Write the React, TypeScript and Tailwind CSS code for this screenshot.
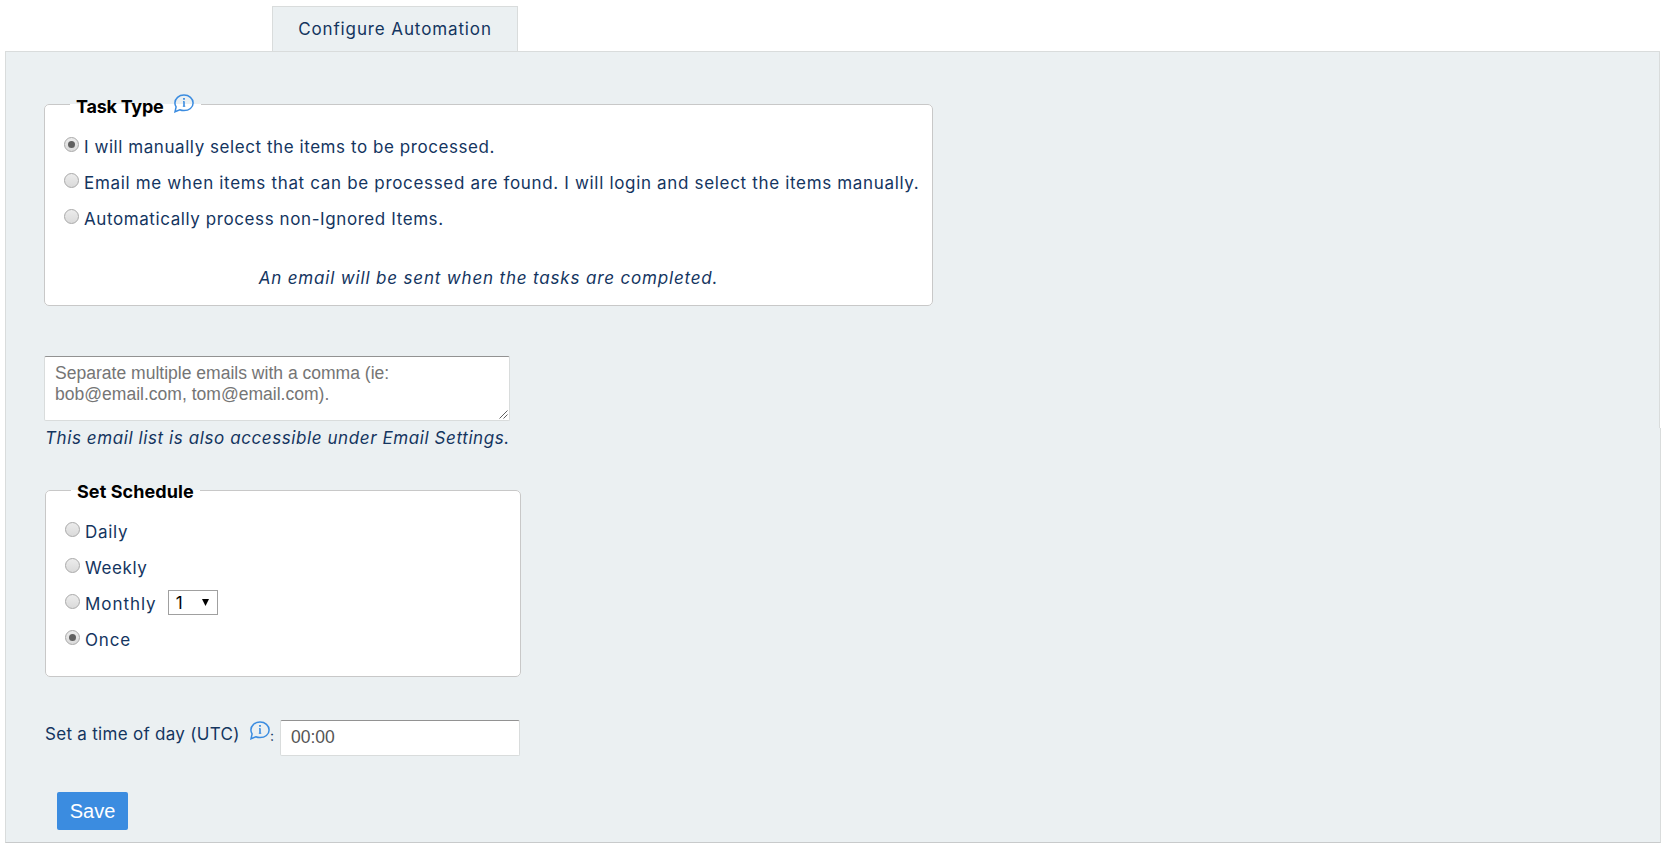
import { useState } from "react";

const taskTypes = [
  { label: "I will manually select the items to be processed.", tracking: "tracking-[0.56px]" },
  {
    label: "Email me when items that can be processed are found. I will login and select the items manually.",
    tracking: "tracking-[0.67px]",
  },
  { label: "Automatically process non-Ignored Items.", tracking: "tracking-[0.59px]" },
];

const schedules = [
  { label: "Daily", tracking: "tracking-[0.7px]" },
  { label: "Weekly", tracking: "tracking-[0.6px]" },
  { label: "Monthly", tracking: "tracking-[0.95px]" },
  { label: "Once", tracking: "tracking-[0.8px]" },
];

function InfoIcon() {
  return (
    <svg width="20" height="19" viewBox="0 0 20 19" fill="none" stroke="#3b8ce0" strokeWidth="1.5">
      <path d="M1 17.8 L2.1 12.8 C1.3 11.6 0.9 10.4 0.9 9 C0.9 4.5 4.9 1 10 1 C15.1 1 19.1 4.5 19.1 9 C19.1 13.5 15.1 16.6 10 16.6 C8.4 16.6 7 16.3 5.8 15.8 Z" />
      <path d="M10 7.2 V12.6" strokeWidth="1.6" />
      <path d="M9 7.6 H10 M8.8 12.3 H11.3" strokeWidth="0.9" />
      <path d="M9.1 4.8 H10.9" strokeWidth="1.7" />
    </svg>
  );
}

function Radio({ name, checked, onChange }: { name: string; checked: boolean; onChange: () => void }) {
  return (
    <span className="mb-[5px] flex size-[15px] shrink-0 items-center justify-center rounded-full border border-[#a9a9a9] bg-linear-to-b from-[#ececec] to-[#dadada]">
      <input type="radio" name={name} checked={checked} onChange={onChange} className="sr-only" />
      {checked && <span className="size-[7px] rounded-full bg-[#606060]" />}
    </span>
  );
}

export default function App() {
  const [taskType, setTaskType] = useState(0);
  const [schedule, setSchedule] = useState("Once");

  return (
    <div className="h-[843px] overflow-hidden bg-white pt-1.5 pl-[5px] font-['Inter',sans-serif] text-[17px] text-[#14355f]">
      {/* Tab */}
      <div className="ml-[267px] flex h-[45px] w-[246px] justify-center border border-b-0 border-[#d9dcdc] bg-[#ebf0f2] pt-[10px] leading-6">
        <span className="tracking-[0.88px]">Configure Automation</span>
      </div>

      {/* Task type and emails */}
      <div className="h-[377px] w-[1655px] border-x border-t border-[#d9dcdc] bg-[#ebf0f2] pt-[38px] pl-[38px]">
        <fieldset className="h-[216px] w-[889px] rounded-[5px] border border-[#c8c8c8] bg-white pl-[19px]">
          <legend className="ml-1.5 flex h-7 w-[131px] pl-1.5 leading-7">
            <span className="pt-[3px] text-lg leading-7 font-bold tracking-[-0.25px] whitespace-nowrap text-black">
              Task Type
            </span>
            <span className="ml-auto pt-1 pr-[7px]">
              <InfoIcon />
            </span>
          </legend>
          <div className="pt-[11px]">
            {taskTypes.map((t, i) => (
              <label key={t.label} className="flex h-9 items-center gap-[5px] whitespace-nowrap">
                <Radio name="task" checked={taskType === i} onChange={() => setTaskType(i)} />
                <span className={t.tracking + " pt-0.5"}>{t.label}</span>
              </label>
            ))}
          </div>
          <p className="mt-[29px] pr-[19px] text-center leading-6 tracking-[0.83px] italic">
            An email will be sent when the tasks are completed.
          </p>
        </fieldset>

        <div className="relative mt-[50px] w-[466px]">
          <textarea
            className="block h-[65px] w-full resize-none rounded-[2px] border border-[#d9dcdc] border-t-[#929292] bg-white px-2.5 pt-1.5 font-['Liberation_Sans',Arial,sans-serif] text-[17.55px] leading-[21px] placeholder:text-[#757575]"
            placeholder={"Separate multiple emails with a comma (ie:\nbob@email.com, tom@email.com)."}
          />
          <svg className="absolute right-[2px] bottom-[2px]" width="9" height="9" viewBox="0 0 9 9" stroke="#606060">
            <path d="M0.5 8.5 L8.5 0.5 M4.5 8.5 L8.5 4.5" />
          </svg>
        </div>
      </div>

      {/* Schedule */}
      <div className="h-[415px] w-[1656px] border-x border-b border-[#d9dcdc] border-b-[#c8cacb] bg-[#ebf0f2] pl-[39px]">
        <p className="leading-5 tracking-[0.59px] italic">This email list is also accessible under Email Settings.</p>

        <fieldset className="mt-7 h-[201px] w-[476px] rounded-[5px] border border-[#c8c8c8] bg-white pl-[19px]">
          <legend className="ml-1.5 h-7 w-[129px] pt-0.5 pl-1.5 text-lg leading-7 font-bold tracking-[0.08px] whitespace-nowrap text-black">
            Set Schedule
          </legend>
          <div className="pt-2.5">
            {schedules.map((s) => (
              <label key={s.label} className="flex h-9 items-center gap-[5px]">
                <Radio name="schedule" checked={schedule === s.label} onChange={() => setSchedule(s.label)} />
                <span className={s.tracking + " pt-0.5"}>{s.label}</span>
                {s.label === "Monthly" && (
                  <span className="mb-[3px] ml-1.5 flex h-[25px] w-[50px] items-center justify-between border border-[#a0a0a0] bg-white pr-2 pl-[7px] text-black">
                    <span className="pt-0.5">1</span>
                    <svg width="7" height="7" viewBox="0 0 7 7">
                      <path d="M0 0H7L3.5 7Z" fill="#000" />
                    </svg>
                  </span>
                )}
              </label>
            ))}
          </div>
        </fieldset>

        <div className="mt-[43px] flex h-9 items-start">
          <span className="w-[205px] pt-[2px] leading-6 tracking-[0.29px]">Set a time of day (UTC)</span>
          <span className="flex w-[30px] items-start">
            <span className="pt-px">
              <InfoIcon />
            </span>
            <span className="pt-1 text-sm leading-6">:</span>
          </span>
          <input
            defaultValue="00:00"
            className="h-9 w-60 rounded-[2px] border border-[#d9dcdc] border-t-[#929292] bg-white px-2.5 pb-px font-['Liberation_Sans',Arial,sans-serif] text-[17.5px] text-[#555]"
          />
        </div>

        <button className="mt-9 ml-3 block h-[38px] w-[71px] rounded-[2px] bg-[#3b8ce0] font-['Liberation_Sans',Arial,sans-serif] text-xl leading-[38px] text-white">
          Save
        </button>
      </div>
    </div>
  );
}
